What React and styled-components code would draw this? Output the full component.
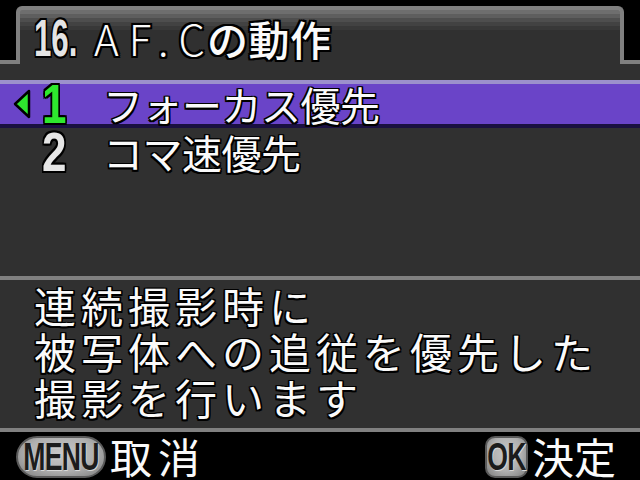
import React from "react";
import styled, { createGlobalStyle } from "styled-components";

const GlobalStyle = createGlobalStyle`
  html, body { margin: 0; padding: 0; background: #000; }
  body { width: 640px; height: 480px; overflow: hidden; }
`;

const outline = (w) => `
  text-shadow:
    ${w}px 0 0 #000, -${w}px 0 0 #000, 0 ${w}px 0 #000, 0 -${w}px 0 #000,
    ${w}px ${w}px 0 #000, -${w}px ${w}px 0 #000, ${w}px -${w}px 0 #000, -${w}px -${w}px 0 #000;
`;

const Screen = styled.div`
  width: 640px;
  height: 480px;
  display: flex;
  flex-direction: column;
  background: #000;
  font-family: "Noto Sans CJK JP", "Noto Sans", sans-serif;
  color: #fafafa;
  overflow: hidden;
`;

const Header = styled.div`
  height: 64px;
  display: flex;
  flex-shrink: 0;
  padding-top: 6px;
  box-sizing: border-box;
`;

const Edge = styled.div`
  width: 16px;
  border-bottom: 4px solid #808080;
`;

const Tab = styled.div`
  flex: 1;
  border: 4px solid #808080;
  border-bottom: none;
  border-radius: 6px 6px 0 0;
  background: linear-gradient(
    #6e6e6e 0px, #6e6e6e 4px,
    #5e5e5e 4px, #5e5e5e 8px,
    #4e4e4e 8px, #4e4e4e 12px,
    #424242 12px, #424242 16px,
    #383838 16px, #383838 20px,
    #303030 20px
  );
  display: flex;
  align-items: center;
  padding-left: 14px;
`;

const Title = styled.div`
  display: flex;
  align-items: center;
  height: 100%;
  padding-top: 2px;
  line-height: 1;
  ${outline(2)}
`;

const Chapter = styled.span`
  display: inline-block;
  font-family: "Liberation Sans", sans-serif;
  font-weight: 700;
  font-size: 52px;
  color: #e4e4e4;
  transform: scaleX(0.6);
  transform-origin: left center;
  width: 56px;
  margin-right: 4px;
`;

const TitleCode = styled.span`
  font-weight: 300;
  font-size: 42px;
  letter-spacing: 10px;
  margin-right: -8px;
`;

const TitleText = styled.span`
  font-weight: 500;
  font-size: 41px;
  letter-spacing: 0.5px;
`;

const Body = styled.div`
  flex: 1;
  background: #303030;
  display: flex;
  flex-direction: column;
`;

const List = styled.div`
  margin-top: 16px;
  height: 196px;
  display: flex;
  flex-direction: column;
`;

const Row = styled.div`
  height: 48px;
  box-sizing: border-box;
  display: flex;
  align-items: center;
  background: ${(p) => (p.$active ? "#6a44c8" : "transparent")};
  border-top: 4px solid ${(p) => (p.$active ? "#9c90cc" : "transparent")};
  border-bottom: 4px solid ${(p) => (p.$active ? "#1a1040" : "transparent")};
`;

const Marker = styled.div`
  width: 40px;
  height: 40px;
  display: flex;
  align-items: center;
  padding-left: 12px;
  box-sizing: border-box;
`;

const Num = styled.div`
  width: 63px;
  height: 40px;
  display: flex;
  align-items: center;
  font-family: "Liberation Sans", sans-serif;
  font-weight: 700;
  font-size: 55px;
  line-height: 40px;
  color: ${(p) => (p.$active ? "#2ee82e" : "#e6e6e6")};
  ${outline(2)}
  padding-left: 2px;
  box-sizing: border-box;
`;

const Digit = styled.span`
  display: inline-block;
  transform: scaleX(0.8);
  transform-origin: left center;
`;

const Label = styled.div`
  font-size: 40px;
  line-height: 40px;
  letter-spacing: -0.5px;
  ${outline(1.5)}
`;

const Description = styled.div`
  flex: 1;
  border-top: 4px solid #808080;
  padding: 2px 0 0 34px;
  display: flex;
  flex-direction: column;
`;

const Line = styled.div`
  height: 46px;
  font-size: 42px;
  line-height: 46px;
  letter-spacing: 5px;
  ${outline(1.5)}
`;

const Footer = styled.div`
  height: 52px;
  flex-shrink: 0;
  border-top: 4px solid #808080;
  box-sizing: border-box;
  background: #000;
  display: flex;
  align-items: center;
  justify-content: space-between;
  padding: 0 24px 0 16px;
`;

const Action = styled.div`
  display: flex;
  align-items: center;
  gap: 4px;
  height: 48px;
`;

const Key = styled.div`
  height: 42px;
  width: ${(p) => p.$w}px;
  box-sizing: border-box;
  border-radius: ${(p) => p.$r}px;
  border: 2px solid #5a5a5a;
  background: radial-gradient(ellipse at 50% 40%, #c8c8c8 0%, #b0b0b0 55%, #7c7c7c 100%);
  display: flex;
  align-items: center;
  justify-content: center;
  margin-top: 2px;
`;

const KeyText = styled.span`
  display: inline-block;
  font-family: "Liberation Sans", sans-serif;
  font-weight: 700;
  font-size: 38px;
  line-height: 38px;
  color: #1c1c1c;
  transform: scaleX(${(p) => p.$sx});
  letter-spacing: -1px;
  text-shadow: 1px 1px 0 #d8d8d8;
`;

const ActionLabel = styled.span`
  font-size: 42px;
  line-height: 48px;
  letter-spacing: ${(p) => p.$ls}px;
  ${outline(1)}
`;

const Arrow = () => (
  <svg width="20" height="30" viewBox="0 0 20 30">
    <path d="M17 2 L3 15 L17 28 Z" fill="#2ee82e" stroke="#000" strokeWidth="2.5" strokeLinejoin="round" />
  </svg>
);

const options = [
  { n: "1", label: "フォーカス優先" },
  { n: "2", label: "コマ速優先" },
];

const selected = 0;

export default function App() {
  return (
    <>
      <GlobalStyle />
      <Screen>
        <Header>
          <Edge />
          <Tab>
            <Title>
              <Chapter>16.</Chapter>
              <TitleCode>AF.C</TitleCode>
              <TitleText>の動作</TitleText>
            </Title>
          </Tab>
          <Edge />
        </Header>
        <Body>
          <List>
            {options.map((o, i) => (
              <Row key={o.n} $active={i === selected}>
                <Marker>{i === selected && <Arrow />}</Marker>
                <Num $active={i === selected}>
                  <Digit>{o.n}</Digit>
                </Num>
                <Label>{o.label}</Label>
              </Row>
            ))}
          </List>
          <Description>
            <Line>連続撮影時に</Line>
            <Line>被写体への追従を優先した</Line>
            <Line>撮影を行います</Line>
          </Description>
        </Body>
        <Footer>
          <Action>
            <Key $w={90} $r={21}>
              <KeyText $sx={0.7}>MENU</KeyText>
            </Key>
            <ActionLabel $ls={6}>取消</ActionLabel>
          </Action>
          <Action>
            <Key $w={43} $r={10}>
              <KeyText $sx={0.7}>OK</KeyText>
            </Key>
            <ActionLabel $ls={0}>決定</ActionLabel>
          </Action>
        </Footer>
      </Screen>
    </>
  );
}
